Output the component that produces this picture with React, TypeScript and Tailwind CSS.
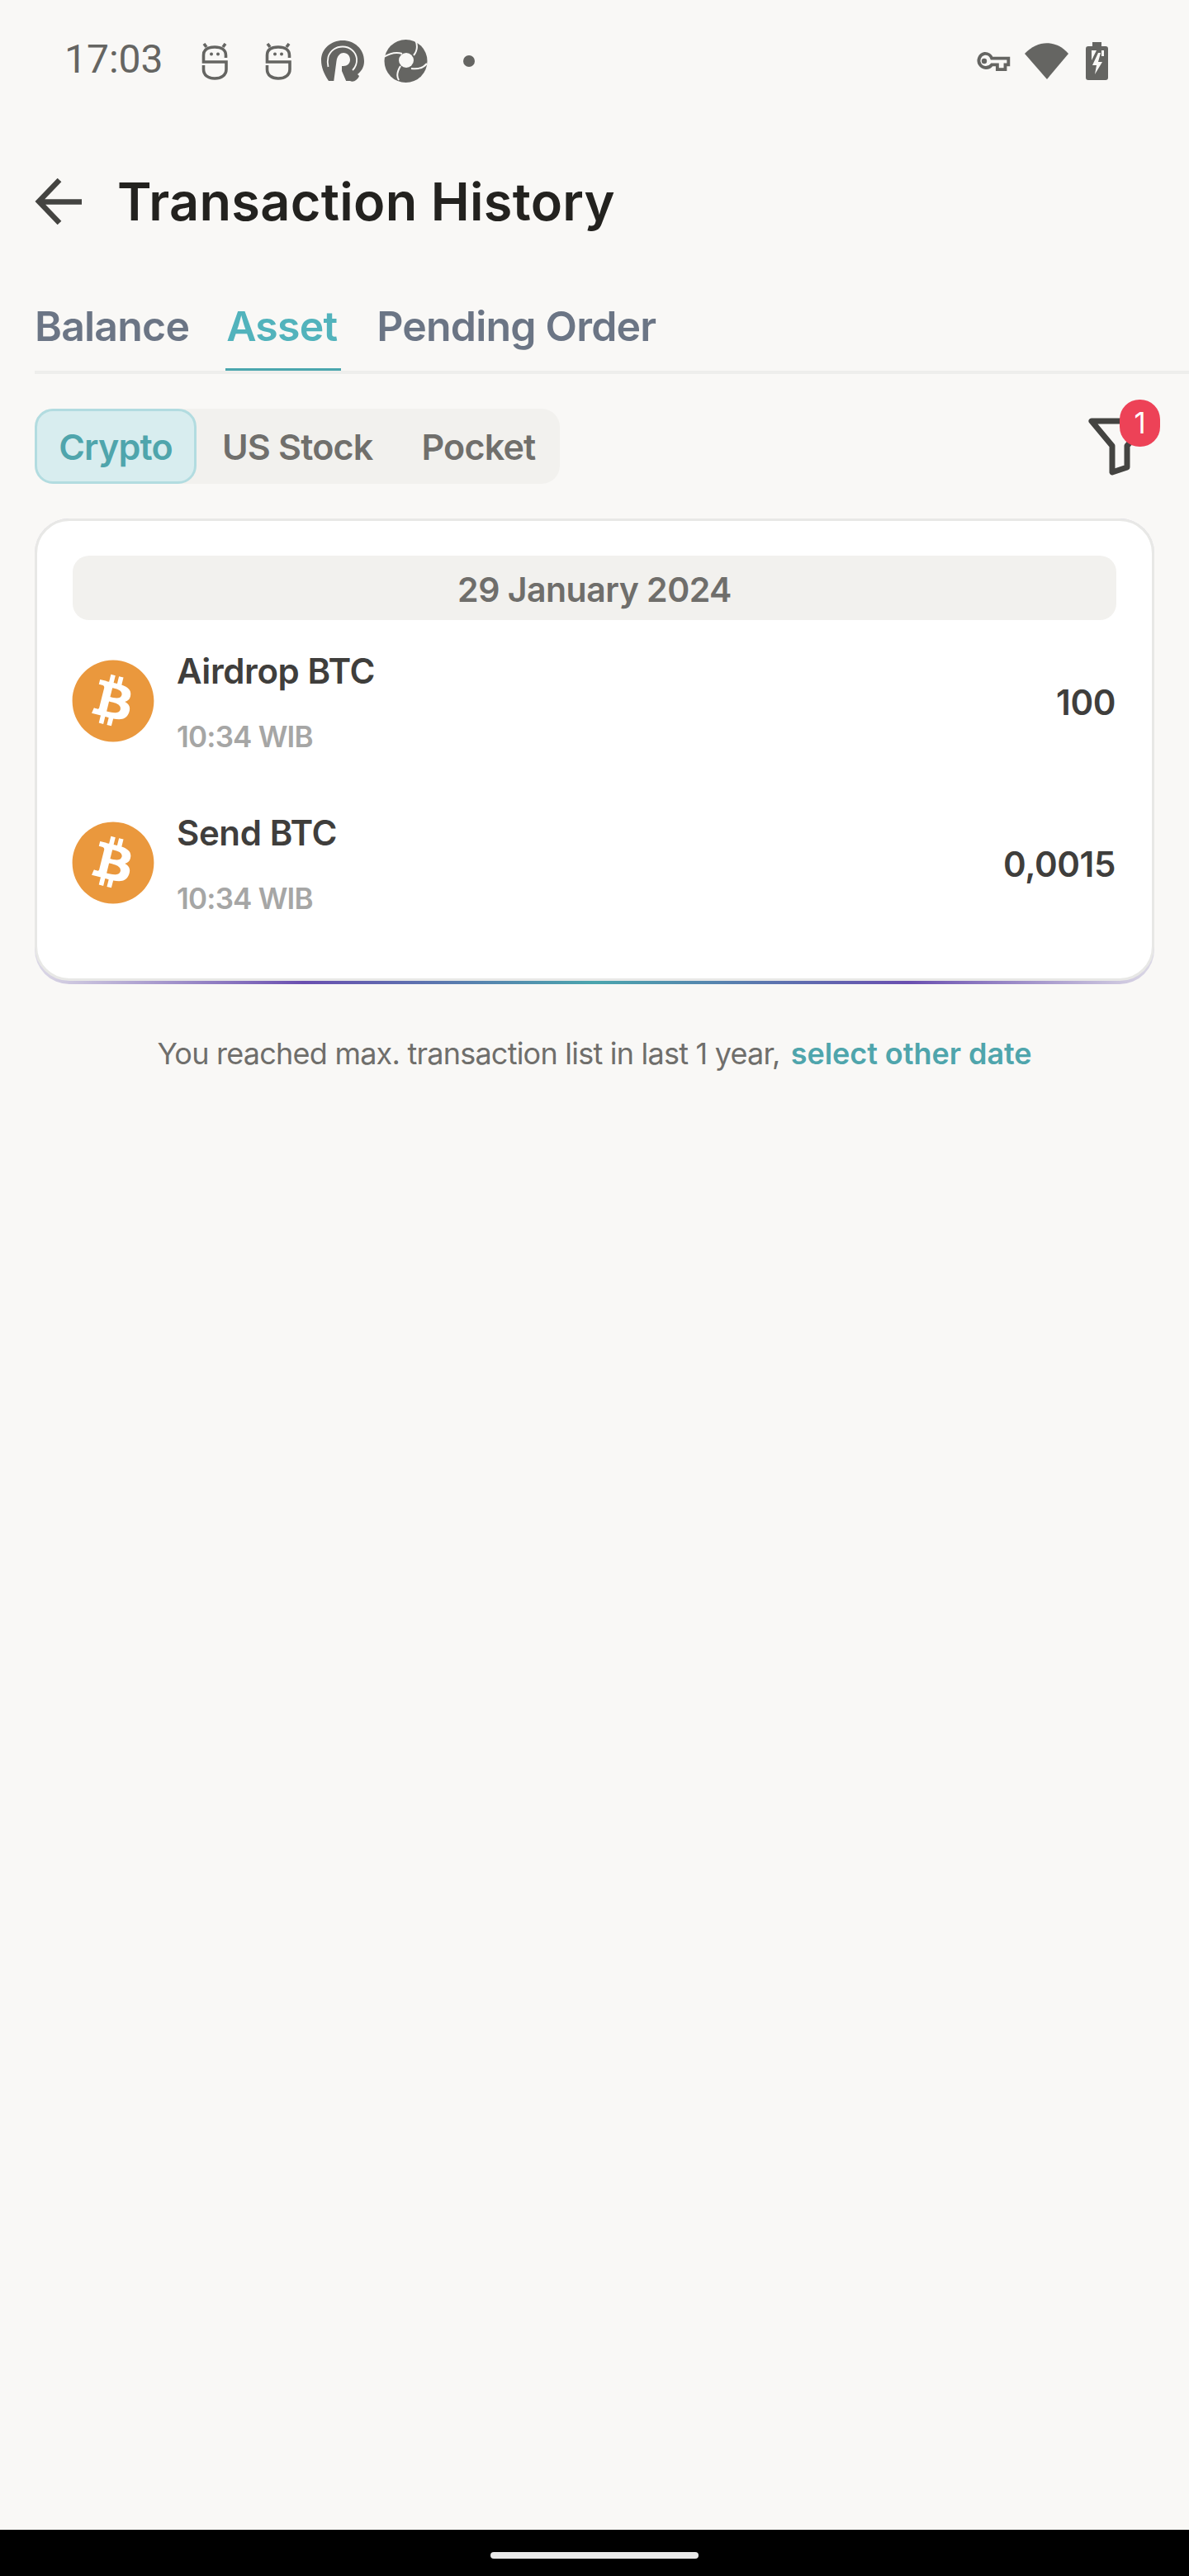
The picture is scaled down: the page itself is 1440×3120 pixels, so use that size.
import { FaBitcoin } from "react-icons/fa";

function Robot() {
  return (
    <svg width="32" height="45" viewBox="0 0 32 45" fill="none" stroke="#656562" strokeWidth="3.6" className="shrink-0">
      <path d="M29.5 18 V15 C29.5 8 24 5 16 5 C8 5 2.5 8 2.5 15 V23 H30 V32 C30 39 24 43 16 43 C8 43 2.5 39 2.5 32 V27" />
      <path d="M3 1 L6 5 M29 1 L26 5" />
      <circle cx="12" cy="13.5" r="2" fill="#656562" stroke="none" />
      <circle cx="20" cy="13.5" r="2" fill="#656562" stroke="none" />
    </svg>
  );
}

function RLogo() {
  return (
    <svg width="52" height="51" viewBox="0 0 52 51" fill="none" className="shrink-0">
      <path d="M9 49 C3 40 0 32 0 24 C0 10 12 0 26 0 C40 0 52 10 52 25 C52 32 49 37 44 41 L46 43 C44 48 39 51 35 49 Z" fill="#656562" />
      <path d="M8.5 32 C7.5 28 7.5 24 8.5 20 C11 12 18 7.5 26 7.5 C35 7.5 42 14 43 22 C43.5 28 41 33 38 36" stroke="#f9f8f6" strokeWidth="1.8" />
      <path d="M15 51 L18.5 25 C19.5 18 23.5 15 27 15 C32 15 35 19 35 23.5 C35 28 31.5 31 27 31 L25 31 L25 37 L31 51 Z" fill="#f9f8f6" />
    </svg>
  );
}

function Shutter() {
  return (
    <svg width="53" height="54" viewBox="0 0 53 54" fill="none" className="shrink-0">
      <circle cx="26.5" cy="27" r="26" fill="#656562" />
      <circle cx="27" cy="26" r="9" fill="#f9f8f6" />
      <path d="M0 22 C8 17 16 16 22 18 M38 1 C41 8 41 14 36 20 M52 30 C47 36 40 37 33 36 M18 50 C14 44 17 38 20 33" stroke="#f9f8f6" strokeWidth="2" />
    </svg>
  );
}

function Row({ title, amount }: { title: string; amount: string }) {
  return (
    <div className="flex h-[98px] items-center">
      <span className="flex h-[98px] w-[98px] shrink-0 items-center justify-center">
        <FaBitcoin size={102} color="#ea983d" className="shrink-0" />
      </span>
      <div className="mt-[3px] ml-[28px] flex flex-col">
        <span className="h-[50px] text-[42px] leading-[50px] font-semibold tracking-[-0.4px] text-[#3f3e3c]">{title}</span>
        <span className="mt-[32px] h-[44px] text-[35px] leading-[44px] font-semibold tracking-[-0.8px] text-[#a6a6a5]">10:34 WIB</span>
      </div>
      <span className="mt-[4px] mr-[1px] ml-auto text-[42px] leading-[50px] font-semibold tracking-[-0.4px] text-[#3f3e3c]">{amount}</span>
    </div>
  );
}

export default function App() {
  return (
    <div className="flex h-[3120px] w-[1440px] flex-col overflow-hidden bg-[#f9f8f6] font-['Inter',sans-serif]">
      {/* status bar */}
      <div className="mt-[47px] flex h-[54px] items-center pr-[98px] pl-[78px]">
        <span className="mb-[4px] font-['Roboto',sans-serif] text-[48px] leading-[54px] text-[#656562]">17:03</span>
        <div className="ml-[46px] flex items-center">
          <Robot />
          <span className="ml-[45px]"><Robot /></span>
          <span className="ml-[36px]"><RLogo /></span>
          <span className="ml-[24px]"><Shutter /></span>
          <span className="ml-[43px] h-[14px] w-[14px] rounded-full bg-[#656562]" />
        </div>
        <div className="ml-auto flex items-center">
          <svg width="44" height="24" viewBox="0 0 44 24" className="shrink-0">
            <path d="M12 3 A9 9 0 0 1 21 9 H42 V17 H38 V23 H28 V17 H21 A9 9 0 1 1 12 3 Z" fill="none" stroke="#656562" strokeWidth="4" transform="translate(1 0) scale(.96 .96)" />
            <circle cx="12" cy="12" r="3.2" fill="#656562" />
          </svg>
          <svg width="54" height="45" viewBox="0 0 54 45" className="ml-[17px] shrink-0">
            <path d="M0 13 C16 -4 38 -4 53 13 L27 44 Z" fill="#656562" />
          </svg>
          <svg width="27" height="46" viewBox="0 0 27 46" className="ml-[20px] shrink-0">
            <path d="M8 0 H19 V5 H24 Q27 5 27 8 V43 Q27 46 24 46 H3 Q0 46 0 43 V8 Q0 5 3 5 H8 Z" fill="#656562" />
            <path d="M7 10 H13 L7 22 Z M19 10 H22 V17 H19 Z" fill="#f9f8f6" />
            <path d="M15 13 L8 28 H13 L11 39 L20 24 H15 L18 13 Z" fill="#f9f8f6" />
          </svg>
        </div>
      </div>

      {/* header */}
      <div className="mt-[113px] flex h-[60px] items-center pl-[42px]">
        <svg width="58" height="56" viewBox="0 0 58 56" fill="none" stroke="#444441" strokeWidth="6.5" className="shrink-0">
          <path d="M57 28.5 H5 M30 2 L5 28 L30 54" />
        </svg>
        <h1 className="ml-[42px] text-[63px] leading-[60px] font-semibold tracking-[0.3px] text-[#23221f]">Transaction History</h1>
      </div>

      {/* tabs */}
      <div className="mt-[86px] ml-[42px] flex h-[93px] border-b-[4px] border-[#eeeeec] text-[50px] leading-[70px] font-semibold">
        <div className="h-[89px] tracking-[-0.8px] text-[#6b7585]">Balance</div>
        <div className="ml-[44px] h-[89px] w-[140px] border-b-[3px] border-[#4ba6ad] pl-[1px] tracking-[-0.8px] text-[#52b3bc]">Asset</div>
        <div className="ml-[43px] h-[89px] tracking-[-0.8px] text-[#6b7585]">Pending Order</div>
      </div>

      {/* filters */}
      <div className="mt-[42px] flex h-[91px] items-center pr-[46px] pl-[42px]">
        <div className="flex h-[91px] w-[636px] items-center rounded-[22px] bg-[#f2f1ee] text-[43px] font-semibold tracking-[-0.8px] text-[#706f6c]">
          <span className="flex h-[91px] w-[196px] items-center justify-center rounded-[22px] border-[3px] border-[#b2dce0] bg-[#d8edef] pt-[2px] text-[#4fa5ac]">Crypto</span>
          <span className="ml-[31px] pt-[2px]">US Stock</span>
          <span className="ml-[59px] pt-[2px]">Pocket</span>
        </div>
        <div className="relative ml-auto h-[72px] w-[76px]">
          <svg width="76" height="72" viewBox="0 0 76 72" fill="none" stroke="#444441" strokeWidth="7" strokeLinejoin="round">
            <path d="M4 5 H72 L47 35 V61 L29 67 V35 Z" />
          </svg>
          <span className="absolute top-[-21px] left-[38px] flex h-[57px] w-[49px] items-center justify-center rounded-[24px] bg-[#ed4257] text-[35px] text-white">1</span>
        </div>
      </div>

      {/* card */}
      <div className="mx-[42px] mt-[42px] rounded-[42px] bg-[linear-gradient(90deg,#dcd9e6,#6a4fb0_24%,#4aa5ad_50%,#6a4fb0_78%,#dcd9e6)] pb-[4px]">
        <div className="flex h-[560px] flex-col rounded-[42px] border-[3px] border-[#e8e8e6] bg-white px-[43px] pt-[42px]">
          <div className="flex h-[78px] shrink-0 items-center justify-center rounded-[20px] bg-[#f2f1ee] pt-[5px] text-[41px] font-semibold tracking-[-0.5px] text-[#6f6e6b]">29 January 2024</div>
          <div className="mt-[49px]"><Row title="Airdrop BTC" amount="100" /></div>
          <div className="mt-[98px]"><Row title="Send BTC" amount="0,0015" /></div>
        </div>
      </div>

      {/* footer note */}
      <div className="mt-[61px] flex h-[46px] items-center justify-center text-[36px] leading-[46px]">
        <span className="tracking-[-0.77px] text-[#6f6e6b]">You reached max. transaction list in last 1 year,</span>
        <span className="ml-[13px] font-semibold tracking-[-0.05px] text-[#4fa5ac]">select other date</span>
      </div>

      {/* nav bar */}
      <div className="mt-auto flex h-[56px] shrink-0 justify-center bg-black pt-[27px]">
        <span className="h-[8px] w-[252px] rounded-full bg-[#e8e8e8]" />
      </div>
    </div>
  );
}
